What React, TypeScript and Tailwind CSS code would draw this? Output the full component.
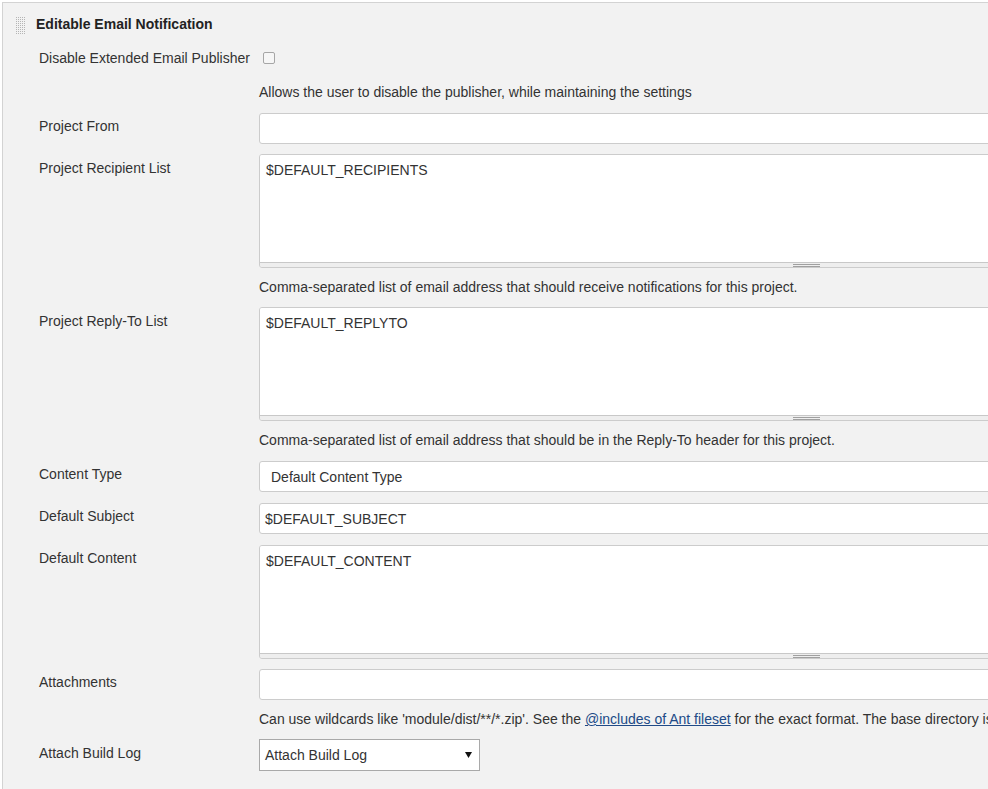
import React from 'react'

const FIELD_W = 'w-[1094px]'

function Grip() {
  const dots: React.ReactNode[] = []
  for (let y = 0; y < 9; y++) {
    for (let x = 0; x < 5; x++) {
      dots.push(<rect key={`${x}-${y}`} x={x * 2} y={y * 2} width="1" height="1" fill="#b5b5b5" />)
    }
  }
  return (
    <svg width="10" height="18" viewBox="0 0 10 18" className="mt-[3px] shrink-0">
      {dots}
    </svg>
  )
}

function Label({ text, pt = 'pt-[3px]' }: { text: string; pt?: string }) {
  return <div className={`w-[256px] shrink-0 pl-[36px] leading-[20px] ${pt}`}>{text}</div>
}

function Help({ children }: { children: React.ReactNode }) {
  return (
    <div className="flex whitespace-nowrap leading-[20px]">
      <div className="w-[256px] shrink-0" />
      <div>{children}</div>
    </div>
  )
}

function TextInput({ value = '' }: { value?: string }) {
  return (
    <div className={`${FIELD_W} h-[31px] shrink-0 flex items-center border border-[#ccc] rounded-[3px] bg-white pl-[5px] leading-[20px]`}>
      {value}
    </div>
  )
}

function TextArea({ value }: { value: string }) {
  return (
    <div className={`${FIELD_W} h-[114px] shrink-0 flex flex-col border border-[#ccc] rounded-[3px] overflow-hidden`}>
      <div className="flex-1 bg-white pt-[5px] pl-[6px] leading-[20px]">{value}</div>
      <div className="h-[5px] border-t border-[#c8c8c8] bg-[#eeeeee] flex justify-center items-start pt-[1px]">
        <div className="w-[27px] h-[3px] border-t border-b border-[#a0a0a0]" />
      </div>
    </div>
  )
}

export default function App() {
  return (
    <div
      className="w-[988px] h-[789px] overflow-hidden bg-white pt-[2px] pl-[2px] text-[14px] text-[#333]"
      style={{ fontFamily: '"Liberation Sans", Arial, sans-serif' }}
    >
      <div className="h-full border-l border-t border-[#d3d3d3] bg-[#f2f2f2]">
        {/* header */}
        <div className="mt-[11px] h-[20px] flex items-start pl-[13px] gap-[10px]">
          <Grip />
          <div className="font-bold leading-[20px] text-[#222]">Editable Email Notification</div>
        </div>

        {/* disable */}
        <div className="mt-[14px] h-[20px] flex items-center">
          <Label text="Disable Extended Email Publisher" pt="pt-0" />
          <div className="ml-[4px] w-[12px] h-[12px] border border-[#a6a6a6] rounded-[2px] bg-[#f6f6f6]" />
        </div>
        <div className="mt-[14px]">
          <Help>Allows the user to disable the publisher, while maintaining the settings</Help>
        </div>

        <div className="mt-[11px] flex">
          <Label text="Project From" />
          <TextInput />
        </div>

        <div className="mt-[10px] flex">
          <Label text="Project Recipient List" pt="pt-[4px]" />
          <TextArea value="$DEFAULT_RECIPIENTS" />
        </div>
        <div className="mt-[9px]">
          <Help>Comma-separated list of email address that should receive notifications for this project.</Help>
        </div>

        <div className="mt-[10px] flex">
          <Label text="Project Reply-To List" pt="pt-[4px]" />
          <TextArea value="$DEFAULT_REPLYTO" />
        </div>
        <div className="mt-[9px]">
          <Help>Comma-separated list of email address that should be in the Reply-To header for this project.</Help>
        </div>

        <div className="mt-[11px] flex">
          <Label text="Content Type" />
          <div className={`${FIELD_W} h-[31px] shrink-0 flex items-center border border-[#ccc] rounded-[3px] bg-white pl-[11px] leading-[20px]`}>
            Default Content Type
          </div>
        </div>

        <div className="mt-[11px] flex">
          <Label text="Default Subject" />
          <TextInput value="$DEFAULT_SUBJECT" />
        </div>

        <div className="mt-[11px] flex">
          <Label text="Default Content" pt="pt-[3px]" />
          <TextArea value="$DEFAULT_CONTENT" />
        </div>

        <div className="mt-[10px] flex">
          <Label text="Attachments" />
          <TextInput />
        </div>
        <div className="mt-[9px]">
          <Help>
            Can use wildcards like 'module/dist/**/*.zip'. See the{' '}
            <a href="#" className="text-[#204a87] underline">@includes of Ant fileset</a>{' '}
            for the exact format. The base directory is the workspace.
          </Help>
        </div>

        <div className="mt-[10px] flex">
          <Label text="Attach Build Log" pt="pt-[4px]" />
          <div className="w-[221px] h-[32px] shrink-0 flex items-center justify-between border border-[#a9a9a9] bg-white pl-[5px] pr-[7px] leading-[20px]">
            <span>Attach Build Log</span>
            <svg width="7" height="6" viewBox="0 0 7 6">
              <polygon points="0,0 7,0 3.5,6" fill="#111" />
            </svg>
          </div>
        </div>
      </div>
    </div>
  )
}
